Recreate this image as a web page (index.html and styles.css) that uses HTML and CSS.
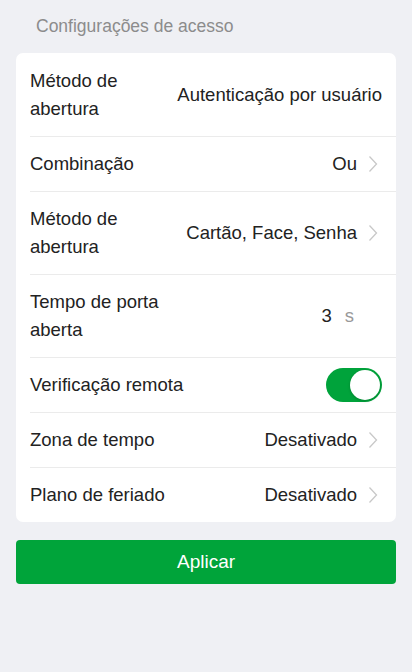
FILE: index.html
```html
<!DOCTYPE html>
<html lang="pt">
<head>
<meta charset="utf-8">
<link rel="stylesheet" href="styles.css">
</head>
<body>
<div class="page">
  <div class="section-title">Configurações de acesso</div>
  <div class="card">
    <div class="row">
      <div class="label">Método de<br>abertura</div>
      <div class="value">Autenticação por usuário</div>
    </div>
    <div class="row">
      <div class="label">Combinação</div>
      <div class="value">Ou</div>
      <svg class="chev" viewBox="0 0 10 18"><path d="M1.5 1.5 L8.5 9 L1.5 16.5" /></svg>
    </div>
    <div class="row">
      <div class="label">Método de<br>abertura</div>
      <div class="value">Cartão, Face, Senha</div>
      <svg class="chev" viewBox="0 0 10 18"><path d="M1.5 1.5 L8.5 9 L1.5 16.5" /></svg>
    </div>
    <div class="row">
      <div class="label">Tempo de porta<br>aberta</div>
      <div class="value num">3<span class="unit">s</span></div>
    </div>
    <div class="row">
      <div class="label">Verificação remota</div>
      <div class="toggle"><div class="knob"></div></div>
    </div>
    <div class="row">
      <div class="label">Zona de tempo</div>
      <div class="value">Desativado</div>
      <svg class="chev" viewBox="0 0 10 18"><path d="M1.5 1.5 L8.5 9 L1.5 16.5" /></svg>
    </div>
    <div class="row">
      <div class="label">Plano de feriado</div>
      <div class="value">Desativado</div>
      <svg class="chev" viewBox="0 0 10 18"><path d="M1.5 1.5 L8.5 9 L1.5 16.5" /></svg>
    </div>
  </div>
  <button class="apply">Aplicar</button>
</div>
</body>
</html>
```

FILE: styles.css
```css
* { box-sizing: border-box; }
html, body {
  margin: 0;
  padding: 0;
  background: #eff0f4;
  font-family: "Liberation Sans", Arial, sans-serif;
}
.page {
  padding: 14px 16px 0;
  display: flex;
  flex-direction: column;
}
.section-title {
  padding-left: 20px;
  font-size: 17.5px;
  line-height: 24px;
  color: #8c8c8c;
  margin-bottom: 15px;
}
.card {
  background: #fff;
  border-radius: 7px;
  padding-left: 14px;
  padding-top: 1px;
}
.row {
  display: flex;
  align-items: center;
  min-height: 55px;
  padding: 13px 14px 13px 0;
  border-bottom: 1px solid #ebebeb;
  font-size: 18.5px;
  line-height: 28px;
  color: #222;
}
.row:last-child { border-bottom: none; min-height: 54px; }
.label { flex: 1; }
.value { text-align: right; }
.chev {
  width: 10px;
  height: 18px;
  margin-left: 11px;
  margin-right: 4px;
  fill: none;
  stroke: #c8c8c8;
  stroke-width: 1.3;
}
.num { margin-right: 28px; }
.unit { color: #999; margin-left: 13px; }
.toggle {
  width: 56px;
  height: 34px;
  margin: -3px 0;
  border-radius: 17px;
  background: #00a33b;
  display: flex;
  align-items: center;
  justify-content: flex-end;
  padding: 2px;
}
.knob {
  width: 30px;
  height: 30px;
  border-radius: 50%;
  background: #fff;
  box-shadow: 0 1px 3px rgba(0,0,0,0.2);
}
.apply {
  margin-top: 18px;
  height: 44px;
  border: none;
  border-radius: 4px;
  background: #00a43a;
  color: #fff;
  font-family: "Liberation Sans", Arial, sans-serif;
  font-size: 19px;
}
```
